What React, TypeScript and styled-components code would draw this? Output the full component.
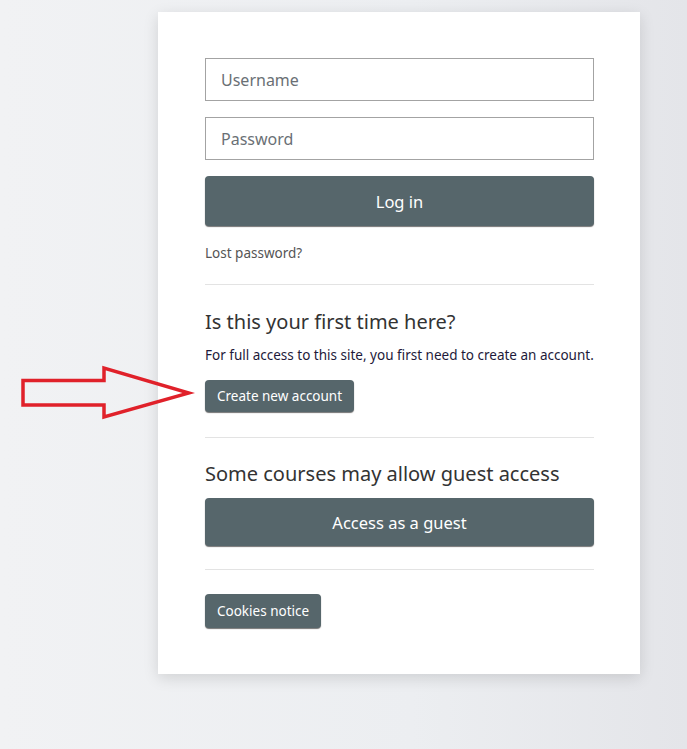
import React from "react";
import styled, { createGlobalStyle } from "styled-components";

const Global = createGlobalStyle`
  html, body { margin: 0; padding: 0; }
  body {
    background: linear-gradient(90deg, #f1f2f4 0%, #eceef1 60%, #e4e5e9 100%);
    min-height: 749px;
    font-family: "Noto Sans", "Open Sans", sans-serif;
  }
`;

const Page = styled.div`
  position: relative;
  padding: 12px 0 0 158px;
  min-height: 749px;
  box-sizing: border-box;
`;

const Card = styled.div`
  width: 482px;
  box-sizing: border-box;
  background: #fff;
  padding: 46px 46px 46px 47px;
  box-shadow: 0 4px 14px rgba(0, 0, 0, 0.13);
`;

const Field = styled.input`
  display: block;
  width: 100%;
  height: 43px;
  box-sizing: border-box;
  border: 1px solid #a3a3a3;
  border-radius: 0;
  padding: 0 15px;
  font-family: inherit;
  font-size: 16px;
  color: #333;
  margin: 0 0 16px;
  &::placeholder { color: #6a7075; }
`;

const Btn = styled.button<{ $h: number; $fs: number; $full?: boolean }>`
  display: ${(p) => (p.$full ? "block" : "inline-block")};
  width: ${(p) => (p.$full ? "100%" : "auto")};
  height: ${(p) => p.$h}px;
  padding: 0 12px;
  background: #56666b;
  color: #fff;
  border: none;
  border-radius: 4px;
  box-shadow: 0 1px 1px rgba(0, 0, 0, 0.55);
  font-family: inherit;
  font-size: ${(p) => p.$fs}px;
  cursor: pointer;
`;

const LostLink = styled.div`
  margin-top: 17px;
  line-height: 20px;
  font-size: 13.5px;
  color: #555;
`;

const Divider = styled.hr<{ $top: number }>`
  border: none;
  border-top: 1px solid #e3e3e3;
  margin: ${(p) => p.$top}px 0 0;
`;

const Heading = styled.h2<{ $top: number }>`
  margin: ${(p) => p.$top}px 0 0;
  font-size: 20px;
  font-weight: 400;
  line-height: 28px;
  color: #333;
`;

const Info = styled.p`
  margin: 9px 0 0;
  font-size: 13.5px;
  line-height: 20px;
  color: #1e1a3a;
  white-space: nowrap;
`;

const Spacer = styled.div<{ $h: number }>`
  height: ${(p) => p.$h}px;
`;

const Arrow = styled.svg`
  position: absolute;
  left: 20px;
  top: 365px;
`;

export default function App() {
  return (
    <>
      <Global />
      <Page>
        <Card>
          <Field placeholder="Username" />
          <Field placeholder="Password" type="password" />
          <Btn $h={50} $fs={16.5} $full>Log in</Btn>
          <LostLink>Lost password?</LostLink>
          <Divider $top={21} />
          <Heading $top={23}>Is this your first time here?</Heading>
          <Info>For full access to this site, you first need to create an account.</Info>
          <Spacer $h={15} />
          <Btn $h={32} $fs={13.5}>Create new account</Btn>
          <Divider $top={25} />
          <Heading $top={22}>Some courses may allow guest access</Heading>
          <Spacer $h={10} />
          <Btn $h={48} $fs={16.5} $full>Access as a guest</Btn>
          <Divider $top={23} />
          <Spacer $h={24} />
          <Btn $h={34} $fs={13.5}>Cookies notice</Btn>
        </Card>
        <Arrow width="175" height="58" viewBox="0 0 175 58">
          <polygon
            points="3,15.5 84,15.5 84,3 169,28 84,52 84,40 3,40"
            fill="none"
            stroke="#e0212a"
            strokeWidth="3.5"
            strokeLinejoin="miter"
          />
        </Arrow>
      </Page>
    </>
  );
}
